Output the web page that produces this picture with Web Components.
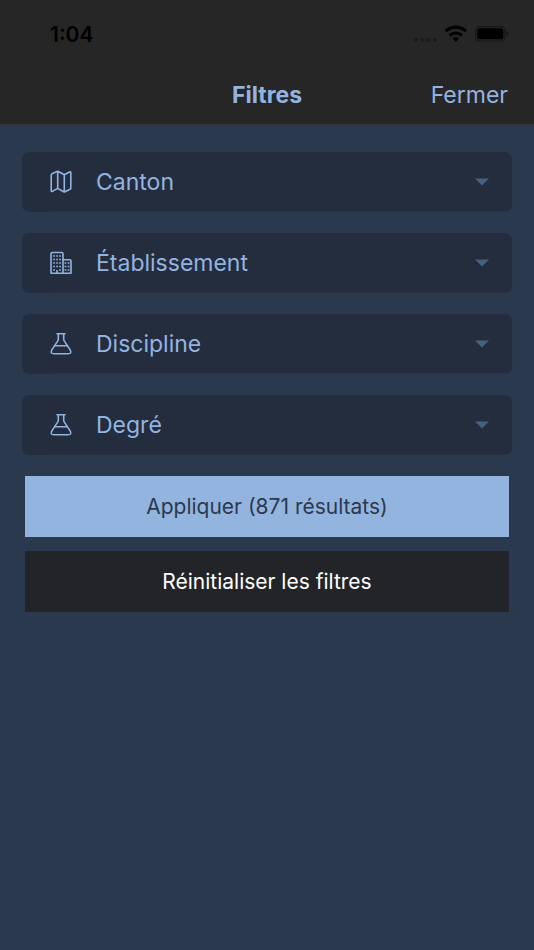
<!DOCTYPE html>
<html lang="fr">
<head>
<meta charset="utf-8">
<meta name="viewport" content="width=device-width, initial-scale=1">
<title>Filtres</title>
<style>
  :root { --bar: #262626; --page: #2b394e; --card: #232d3e; --accent: #94b4e0; --caret: #466081; }
  html, body { margin: 0; min-height: 100%; background: var(--page); }
  body { font-family: Inter, "Liberation Sans", sans-serif; color: var(--accent); }
</style>
</head>
<body>
<filter-screen></filter-screen>

<template id="status-bar">
  <style>
    :host { display: flex; align-items: center; justify-content: space-between; height: 68px; padding: 0 25px 0 50px; color: #000; }
    time { font-size: 21px; line-height: 28px; font-weight: 600; padding-top: 2px; }
    svg { display: block; }
  </style>
  <time>1:04</time>
  <svg width="96" height="20" viewBox="0 0 96 20" aria-hidden="true">
    <g fill="#1c1c1c"><circle cx="3" cy="15.8" r="2.1"/><circle cx="9.3" cy="15.8" r="2.1"/><circle cx="15.5" cy="15.8" r="2.1"/><circle cx="21.8" cy="15.8" r="2.1"/></g>
    <g fill="none" stroke="#000" stroke-width="3.2"><path d="M32.7 7.4a14.3 14.3 0 0 1 20.2 0"/><path d="M36.7 11.5a8.7 8.7 0 0 1 12.2 0"/></g>
    <path d="M42.8 18l-3.2-3.4a4.6 4.6 0 0 1 6.4 0z"/>
    <rect x="62.6" y="2.6" width="29.4" height="14.4" rx="4.2" fill="none" stroke="#141414" stroke-width="1.1"/>
    <rect x="64.3" y="4.3" width="26" height="11" rx="2.6"/>
    <path d="M93.8 7.6c2 .7 2 3.9 0 4.6z" fill="#111"/>
  </svg>
</template>

<template id="nav-bar">
  <style>
    :host { display: grid; grid-template-columns: 1fr auto 1fr; align-items: center; height: 57px; padding: 0 26px 2px; box-sizing: border-box; border-bottom: 1px solid #323436; }
    h1 { margin: 0; grid-column: 2; font-size: 23px; line-height: 28px; font-weight: 700; }
    button { justify-self: end; padding: 0; border: 0; background: none; color: inherit; font: 400 23px/28px Inter, "Liberation Sans", sans-serif; cursor: pointer; }
  </style>
  <h1><slot></slot></h1>
  <button type="button">Fermer</button>
</template>

<template id="filter-select">
  <style>
    :host { display: block; }
    .card { display: grid; grid-template-columns: 74px 1fr 60px; align-items: center; height: 60px; border-radius: 7px; background: linear-gradient(#2b323d, #2b323d) 28px 100% / 100% 1px no-repeat var(--card); }
    select { grid-area: 1 / 1 / 2 / 4; width: 100%; height: 100%; padding: 0 60px 0 74px; border: 0; border-radius: 7px; margin: 0; background: none; appearance: none; color: var(--accent); font: 400 23px/28px Inter, "Liberation Sans", sans-serif; cursor: pointer; }
    slot, .caret { pointer-events: none; }
    ::slotted(svg) { grid-area: 1 / 1; display: block; margin-left: 27px; pointer-events: none; }
    .caret { grid-area: 1 / 3; justify-self: center; fill: var(--caret); }
  </style>
  <div class="card">
    <select><option></option></select>
    <slot></slot>
    <svg class="caret" width="14" height="8" viewBox="0 0 14 8" aria-hidden="true"><path d="M0 .5h14l-7 7z"/></svg>
  </div>
</template>

<template id="action-button">
  <style>
    :host { display: block; }
    button { display: block; width: 100%; height: 61px; padding: 0; border: 0; background: #232428; color: #fff; font: 400 21px/28px Inter, "Liberation Sans", sans-serif; cursor: pointer; }
    :host([primary]) button { background: var(--accent); color: #2b394e; }
  </style>
  <button type="button"><slot></slot></button>
</template>

<template id="filter-screen">
  <style>
    :host { display: block; }
    header { background: var(--bar); }
    .filters { display: grid; gap: 21px; padding: 27px 22px 21px; }
    .actions { display: grid; gap: 14px; padding: 0 25px; }
    svg { fill: none; stroke: var(--accent); stroke-width: 1.6; stroke-linejoin: round; stroke-linecap: round; }
  </style>
  <header>
    <status-bar></status-bar>
    <nav-bar>Filtres</nav-bar>
  </header>
  <main>
    <div class="filters">
      <filter-select label="Canton">
        <svg width="24" height="24" viewBox="0 0 24 24" aria-hidden="true"><path d="M2.2 5.2q0-1 .9-1.5L8 1.5q.7-.3 1.4 0l5.9 3.3 5.3-2.8q1.2-.4 1.2.8v15.1q0 .9-.8 1.4l-5 2.5q-.7.3-1.4 0l-5.9-3.4-5.3 3q-1.2.5-1.2-.8zM8.7 1.6v16.8M15.3 4.8v17"/></svg>
      </filter-select>
      <filter-select label="Établissement">
        <svg width="24" height="24" viewBox="0 0 24 24" aria-hidden="true"><path d="M2 22.2V2.7q0-1.2 1.2-1.2h9.6q1.2 0 1.2 1.2v19.5M14 8.8h6.8q1.2 0 1.2 1.2v12.2H2"/><path stroke-width="1.6" stroke-linecap="butt" d="M4.2 5h1.7m1.3 0h1.7m1.3 0h1.7M4.2 8.5h1.7m1.3 0h1.7m1.3 0h1.7M4.2 12h1.7m1.3 0h1.7m1.3 0h1.7M4.2 15.5h1.7m1.3 0h1.7m1.3 0h1.7M4.2 19h1.7m4.3 0h1.7M15.6 12h1.7m1.4 0h1.7M15.6 15.5h1.7m1.4 0h1.7M15.6 19h1.7m1.4 0h1.7M8 19v3"/></svg>
      </filter-select>
      <filter-select label="Discipline">
        <svg width="24" height="24" viewBox="0 0 24 24" aria-hidden="true"><path d="M8 1.7h8M9.3 1.7v5.6q0 .8-.5 1.6L3 17.6q-2.5 4.2 2.1 4.2h13.8q4.6 0 2.1-4.2l-5.8-8.7q-.5-.8-.5-1.6V1.7M5.7 13.8h12.6"/></svg>
      </filter-select>
      <filter-select label="Degré">
        <svg width="24" height="24" viewBox="0 0 24 24" aria-hidden="true"><path d="M8 1.7h8M9.3 1.7v5.6q0 .8-.5 1.6L3 17.6q-2.5 4.2 2.1 4.2h13.8q4.6 0 2.1-4.2l-5.8-8.7q-.5-.8-.5-1.6V1.7M5.7 13.8h12.6"/></svg>
      </filter-select>
    </div>
    <div class="actions">
      <action-button primary>Appliquer (871 résultats)</action-button>
      <action-button>Réinitialiser les filtres</action-button>
    </div>
  </main>
</template>

<script>
  class TemplateElement extends HTMLElement {
    constructor() {
      super();
      const template = document.getElementById(this.localName);
      this.attachShadow({ mode: "open" }).append(template.content.cloneNode(true));
    }
  }
  class StatusBar extends TemplateElement {}
  class NavBar extends TemplateElement {}
  class ActionButton extends TemplateElement {}
  class FilterScreen extends TemplateElement {}
  class FilterSelect extends TemplateElement {
    connectedCallback() {
      const label = this.getAttribute("label");
      this.shadowRoot.querySelector("select").setAttribute("aria-label", label);
      this.shadowRoot.querySelector("option").textContent = label;
    }
  }
  customElements.define("status-bar", StatusBar);
  customElements.define("nav-bar", NavBar);
  customElements.define("action-button", ActionButton);
  customElements.define("filter-select", FilterSelect);
  customElements.define("filter-screen", FilterScreen);
</script>
</body>
</html>
